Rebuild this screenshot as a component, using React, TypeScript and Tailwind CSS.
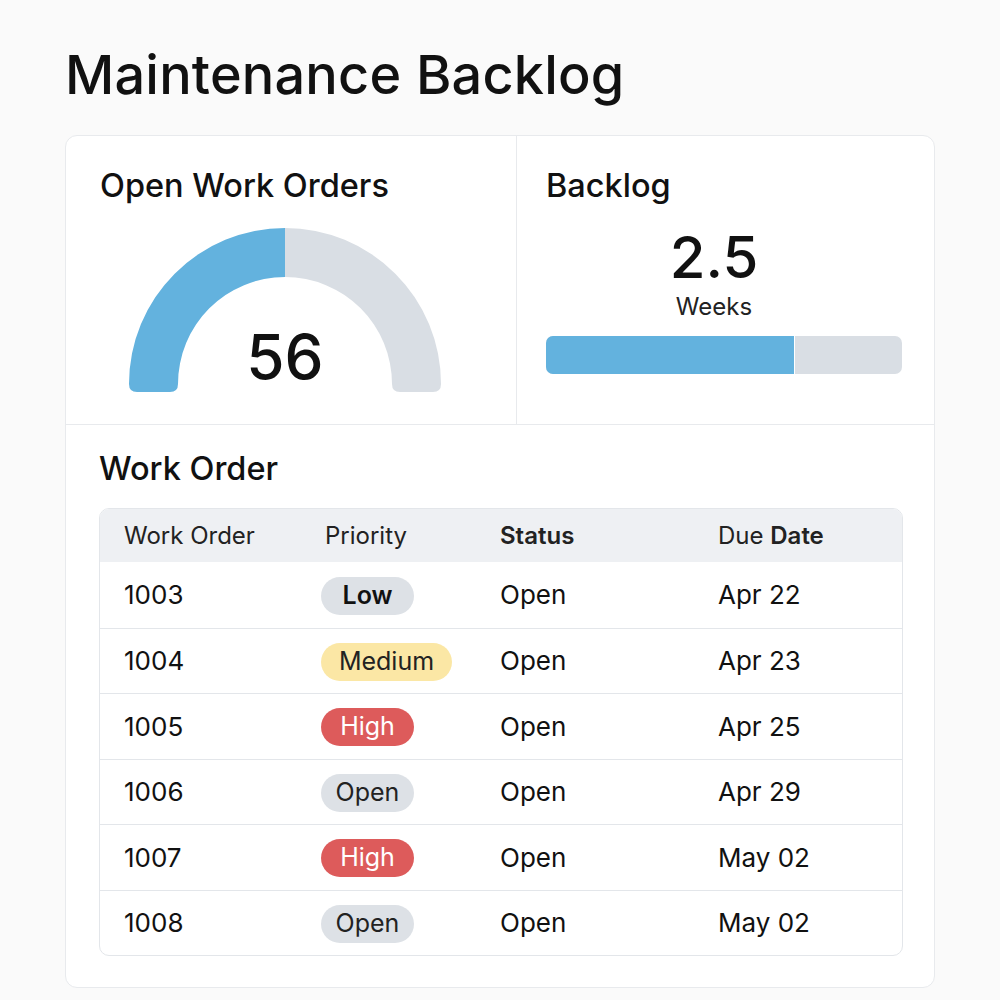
import React from 'react';

type Row = { id: string; priority: string; status: string; due: string };

const rows: Row[] = [
  { id: '1003', priority: 'Low', status: 'Open', due: 'Apr 22' },
  { id: '1004', priority: 'Medium', status: 'Open', due: 'Apr 23' },
  { id: '1005', priority: 'High', status: 'Open', due: 'Apr 25' },
  { id: '1006', priority: 'Open', status: 'Open', due: 'Apr 29' },
  { id: '1007', priority: 'High', status: 'Open', due: 'May 02' },
  { id: '1008', priority: 'Open', status: 'Open', due: 'May 02' },
];

const badgeClass = (p: string) => {
  if (p === 'High') return 'bg-[#dd5b5b] text-white w-[93px]';
  if (p === 'Medium') return 'bg-[#fbe7a5] text-[#222] w-[131px]';
  if (p === 'Low') return 'bg-[#dde1e6] text-[#111] font-semibold w-[93px]';
  return 'bg-[#dde1e6] text-[#222] w-[93px]';
};

const Gauge = () => (
  <svg width="316" height="166" viewBox="0 0 316 166">
    <path
      d="M2 158 A156 156 0 0 1 158 2 L158 51 A107 107 0 0 0 51 158 L51 158 Q51 166 43 166 L10 166 Q2 166 2 158 Z"
      fill="#63b2de"
    />
    <path
      d="M158 2 A156 156 0 0 1 314 158 Q314 166 306 166 L273 166 Q265 166 265 158 A107 107 0 0 0 158 51 Z"
      fill="#d9dee4"
    />
  </svg>
);

const App: React.FC = () => {
  return (
    <div
      className="min-h-screen bg-[#fafafa] px-[65px] pt-[43px] text-[#111]"
      style={{ fontFamily: 'Inter, "Noto Sans", sans-serif' }}
    >
      <h1 className="text-[54px] font-medium leading-[64px] tracking-[0.2px]">
        Maintenance Backlog
      </h1>

      <div className="mt-[28px] bg-white border border-[#e8eaed] rounded-[12px] h-[853px]">
        <div className="flex h-[289px] border-b border-[#e8eaed]">
          <div className="w-[451px] border-r border-[#e8eaed] pl-[34px] pt-[30px]">
            <h2 className="text-[32.5px] font-medium leading-[40px]">Open Work Orders</h2>
            <div className="relative mt-[20px] ml-[27px] w-[316px] h-[166px]">
              <Gauge />
              <div className="absolute left-0 right-0 top-[96px] text-center text-[62px] font-medium leading-[70px]">
                56
              </div>
            </div>
          </div>
          <div className="flex-1 pl-[29px] pr-[32px] pt-[30px]">
            <h2 className="text-[32.5px] font-medium leading-[40px]">Backlog</h2>
            <div className="pr-[20px] text-center text-[58px] font-medium leading-[60px] mt-[21px]">2.5</div>
            <div className="pr-[20px] mt-[6px] text-center text-[24px] leading-[28px] text-[#222]">Weeks</div>
            <div className="mt-[15px] flex h-[38px] rounded-[7px] overflow-hidden bg-[#d9dee4]">
              <div className="w-[70%] bg-[#63b2de] border-r border-white" />
            </div>
          </div>
        </div>

        <div className="pl-[33px] pr-[31px] pt-[24px]">
          <h2 className="text-[32.5px] font-medium leading-[40px]">Work Order</h2>
          <div className="mt-[19px] border border-[#e3e6ea] rounded-[10px] overflow-hidden">
            <div className="grid grid-cols-[197px_179px_218px_1fr] pl-[24px] h-[53px] items-center bg-[#eef0f3] text-[24px] text-[#222]">
              <div>Work Order</div>
              <div className="pl-[4px]">Priority</div>
              <div className="font-semibold">Status</div>
              <div>
                Due <span className="font-semibold">Date</span>
              </div>
            </div>
            {rows.map((r, i) => (
              <div
                key={r.id}
                className={
                  'grid grid-cols-[197px_179px_218px_1fr] pl-[24px] h-[65.5px] items-center text-[26px] ' +
                  (i > 0 ? 'border-t border-[#e3e6ea]' : '')
                }
              >
                <div>{r.id}</div>
                <div>
                  <span
                    className={
                      'inline-flex h-[38px] items-center justify-center rounded-full text-[25px] ' +
                      badgeClass(r.priority)
                    }
                  >
                    {r.priority}
                  </span>
                </div>
                <div>{r.status}</div>
                <div>{r.due}</div>
              </div>
            ))}
          </div>
        </div>
      </div>
    </div>
  );
};

export default App;
